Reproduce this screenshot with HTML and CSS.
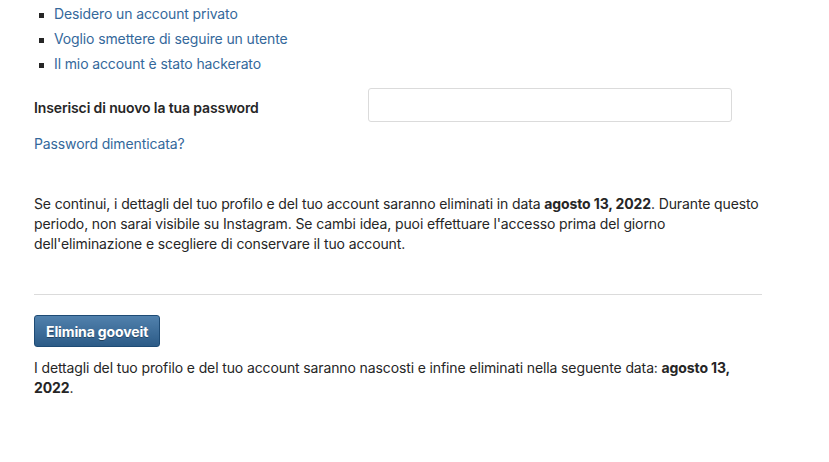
FILE: index.html
```html
<!DOCTYPE html>
<html>
<head>
  <meta charset="UTF-8">
  <title>Elimina account</title>
  <link rel="stylesheet" href="styles.css">
</head>
<body>
  <div class="page">
    <ul class="reasons">
      <li><a href="#">Desidero un account privato</a></li>
      <li><a href="#">Voglio smettere di seguire un utente</a></li>
      <li><a href="#">Il mio account è stato hackerato</a></li>
    </ul>

    <div class="form-row">
      <label for="pw">Inserisci di nuovo la tua password</label>
      <input type="password" id="pw">
    </div>
    <a class="forgot" href="#">Password dimenticata?</a>

    <p class="info">Se continui, i dettagli del tuo profilo e del tuo account saranno eliminati in data <b>agosto 13, 2022</b>. Durante questo periodo, non sarai visibile su Instagram. Se cambi idea, puoi effettuare l'accesso prima del giorno dell'eliminazione e scegliere di conservare il tuo account.</p>

    <hr class="divider">

    <button class="delete">Elimina gooveit</button>
    <p class="note">I dettagli del tuo profilo e del tuo account saranno nascosti e infine eliminati nella seguente data: <b>agosto 13, 2022</b>.</p>
  </div>
</body>
</html>
```

FILE: styles.css
```css
body {
  margin: 0;
  background: #fff;
  color: #262626;
  font-family: Inter, "Liberation Sans", sans-serif;
  font-size: 14px;
  line-height: 20px;
  letter-spacing: -0.12px;
}
a {
  color: #34689b;
  text-decoration: none;
}
.page {
  width: 728px;
  padding: 4px 0 0 34px;
}
.reasons {
  list-style: none;
  margin: 0;
  padding: 0 0 0 5px;
}
.reasons li {
  display: flex;
  align-items: center;
  margin-bottom: 5px;
}
.reasons li::before {
  content: "";
  width: 5px;
  height: 5px;
  background: #262626;
  margin: 3px 10px 0 0;
}
.form-row {
  display: flex;
  align-items: flex-start;
  margin-top: 14px;
}
.form-row label {
  width: 334px;
  margin-top: 10px;
  font-weight: 600;
}
.form-row input {
  width: 364px;
  height: 34px;
  box-sizing: border-box;
  border: 1px solid #dbdbdb;
  border-radius: 3px;
  background: #fff;
  padding: 0 8px;
}
.forgot {
  display: block;
  margin-top: 12px;
}
.info {
  margin: 40px 0 0;
}
.divider {
  border: 0;
  border-top: 1px solid #dbdbdb;
  margin: 40px 0 20px;
}
.delete {
  height: 32px;
  padding: 0 11px;
  font-family: inherit;
  font-size: 14px;
  font-weight: 700;
  letter-spacing: -0.12px;
  color: #fff;
  text-shadow: 0 1px 0 rgba(0, 0, 0, 0.35);
  background: linear-gradient(#5181ad, #2c5b87);
  border: 1px solid #1e4b75;
  border-radius: 3px;
  cursor: pointer;
}
.note {
  margin: 11px 0 0;
}
```
